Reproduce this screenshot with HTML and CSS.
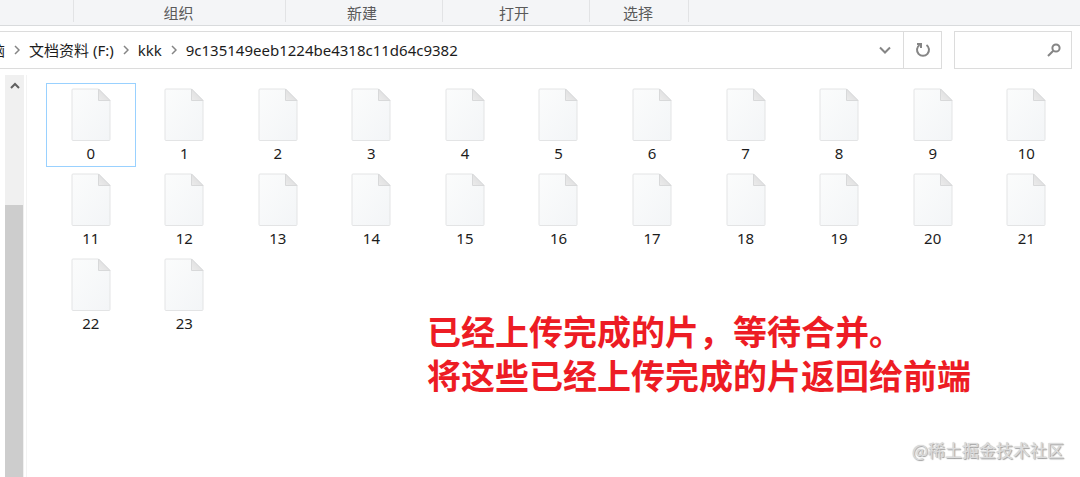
FILE: index.html
```html
<!DOCTYPE html>
<html lang="zh-CN">
<head>
<meta charset="utf-8">
<meta name="viewport" content="width=device-width, initial-scale=1">
<title>kkk</title>
<link rel="stylesheet" href="styles.css">
<script src="files.js" defer></script>
</head>
<body>
<svg class="defs" aria-hidden="true">
  <defs>
    <linearGradient id="sheet" x1="0" y1="0" x2="1" y2="1">
      <stop offset="0" stop-color="#fbfcfc"/>
      <stop offset="1" stop-color="#f3f5f7"/>
    </linearGradient>
    <linearGradient id="fold" x1="0" y1="1" x2="1" y2="0">
      <stop offset="0" stop-color="#ececec"/>
      <stop offset="1" stop-color="#d8d8d9"/>
    </linearGradient>
    <symbol id="file" viewBox="0 0 40 53">
      <path d="M2 1H27.500L39 12.500V51.500Q39 52.500 38 52.500H2Q1 52.500 1 51.500V2Q1 1 2 1Z" fill="url(#sheet)" stroke="#e3e4e5"/>
      <path d="M27.500 1V12.500H39Z" fill="url(#fold)" stroke="#d8d9da"/>
    </symbol>
  </defs>
</svg>
<div class="window">
  <header class="ribbon">
    <span class="group lead"></span>
    <span class="group organize">组织</span>
    <span class="group create">新建</span>
    <span class="group open">打开</span>
    <span class="group select">选择</span>
  </header>
  <div class="toolbar">
    <div class="address">
      <nav class="crumbs" aria-label="路径">
        <a class="crumb cut" href="#">脑</a>
        <svg class="sep" viewBox="0 0 6 10"><path d="M1 1L5 5L1 9"/></svg>
        <a class="crumb" href="#">文档资料 (F:)</a>
        <svg class="sep" viewBox="0 0 6 10"><path d="M1 1L5 5L1 9"/></svg>
        <a class="crumb" href="#">kkk</a>
        <svg class="sep" viewBox="0 0 6 10"><path d="M1 1L5 5L1 9"/></svg>
        <a class="crumb" href="#">9c135149eeb1224be4318c11d64c9382</a>
      </nav>
      <button class="tool history" aria-label="历史记录"><svg width="12" height="8" viewBox="0 0 12 8"><path d="M1 1.500L6 6.500L11 1.500"/></svg></button>
      <button class="tool refresh" aria-label="刷新"><svg width="16" height="16" viewBox="0 0 16 16"><path d="M11.500 3A6 6 0 1 1 4.500 3M2 2H6V6"/></svg></button>
    </div>
    <div class="search">
      <input type="search" aria-label="搜索">
      <svg width="14" height="14" viewBox="0 0 14 14"><circle cx="9" cy="5" r="3.600"/><path d="M6.300 7.700L1 13"/></svg>
    </div>
  </div>
  <div class="content">
    <div class="scrollbar">
      <button class="up" aria-label="向上滚动"><svg width="10" height="7" viewBox="0 0 10 7"><path d="M1 6L5 2L9 6"/></svg></button>
      <div class="thumb"></div>
    </div>
    <main class="pane">
      <div class="files" id="files"></div>
      <p class="note">已经上传完成的片，等待合并。<br>将这些已经上传完成的片返回给前端</p>
      <p class="mark">@稀土掘金技术社区</p>
    </main>
  </div>
</div>
</body>
</html>
```
FILE: styles.css
```css
* { box-sizing: border-box; }
body {
  margin: 0;
  background: #fff;
  color: #1c1c1c;
  font: 15px/20px "Noto Sans", "Noto Sans CJK SC", sans-serif;
}
button, input { font: inherit; color: inherit; background: none; border: 0; padding: 0; }
svg { fill: none; stroke: #858585; stroke-width: 2; flex: none; }
.defs { position: absolute; width: 0; height: 0; }
.window { display: flex; flex-direction: column; min-height: 100vh; overflow: hidden; }

.ribbon {
  display: flex;
  height: 26px;
  padding-bottom: 3px;
  background: #f4f5f7;
  border-bottom: 1px solid #d9dbdd;
  color: #5a5a5a;
  line-height: 26px;
}
.group { border-right: 1px solid #e2e3e5; text-align: center; }
.lead { width: 74px; }
.organize { width: 212px; padding-right: 2px; }
.create { width: 157px; padding-right: 4px; }
.open { width: 147px; padding-right: 4px; }
.select { width: 99px; padding-right: 2px; }

.toolbar { display: flex; gap: 12px; padding: 5px 8px 6px 0; }
.address { flex: 1; display: flex; height: 38px; border: 1px solid #dcdcdc; border-left: 0; }
.crumbs { flex: 1; display: flex; align-items: center; min-width: 0; padding-bottom: 1px; }
.crumb { color: #1c1c1c; text-decoration: none; white-space: nowrap; }
.cut { width: 5px; display: flex; justify-content: flex-end; }
.sep { width: 6px; height: 10px; margin: 0 9px; stroke-width: 1.500; }
.tool { width: 36px; display: grid; place-items: center; }
.refresh { width: 38px; border-left: 1px solid #dcdcdc; }
.search { width: 118px; display: flex; align-items: center; border: 1px solid #dcdcdc; padding-right: 10px; }
.search input { flex: 1; min-width: 0; outline: 0; }

.content { flex: 1; display: flex; padding-left: 5px; }
.scrollbar { width: 19px; flex: none; display: flex; flex-direction: column; background: #f0f0f0; }
.up { height: 20px; display: grid; place-items: center; }
.up svg { stroke: #606060; }
.thumb { flex: 1; margin: 110px 1px 0 0; background: #cdcdcd; }
.pane { position: relative; flex: 1; margin-left: 2px; padding: 8px 7px 0 17px; border-left: 1px solid #f3f3f3; }
.files { display: grid; grid-template-columns: repeat(11, 1fr); row-gap: 1px; }
.file {
  justify-self: center;
  width: 90px;
  height: 84px;
  display: flex;
  flex-direction: column;
  align-items: center;
  gap: 2px;
  padding-top: 4px;
  border: 1px solid transparent;
}
.file.current { border-color: #99d1ff; }
.file svg { width: 40px; height: 53px; stroke-width: 1; }

.note {
  position: absolute;
  left: 400px;
  top: 234px;
  margin: 0;
  color: #ed1c24;
  font: bold 34px/44px "Noto Sans CJK SC", sans-serif;
  white-space: nowrap;
}
.mark {
  position: absolute;
  right: 16px;
  bottom: 15px;
  margin: 0;
  color: #dcdcdc;
  font: 17px/24px "Noto Sans CJK SC", sans-serif;
  text-shadow: 0 0 1px #bbb, 1px 1px 1px #999;
}
```
FILE: files.js
```javascript
const list = document.getElementById("files");
for (let i = 0; i < 24; i++) {
  const item = document.createElement("button");
  item.className = i === 0 ? "file current" : "file";
  item.innerHTML = `<svg aria-hidden="true"><use href="#file"/></svg><span>${i}</span>`;
  list.append(item);
}
```
